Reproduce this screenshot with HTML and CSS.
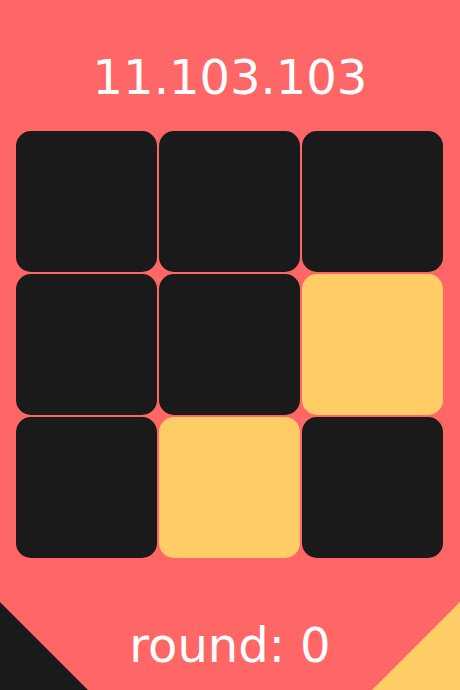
FILE: index.html
```html
<!DOCTYPE html>
<html>
<head>
<meta charset="utf-8">
<link rel="stylesheet" href="styles.css">
</head>
<body>
<div class="page">
  <div class="title">11.103.103</div>
  <div class="grid">
    <div class="tile dark"></div>
    <div class="tile dark"></div>
    <div class="tile dark"></div>
    <div class="tile dark"></div>
    <div class="tile dark"></div>
    <div class="tile light"></div>
    <div class="tile dark"></div>
    <div class="tile light"></div>
    <div class="tile dark"></div>
  </div>
  <div class="round">round: 0</div>
  <div class="corner corner-left"></div>
  <div class="corner corner-right"></div>
</div>
</body>
</html>
```
FILE: styles.css
```css
html, body {
  margin: 0;
  padding: 0;
  background: #ff6666;
}
.page {
  position: relative;
  width: 460px;
  height: 690px;
  overflow: hidden;
  display: flex;
  flex-direction: column;
  align-items: center;
  font-family: "DejaVu Sans", Verdana, sans-serif;
  color: #ffffff;
}
.title {
  margin-top: 49px;
  font-size: 48px;
  line-height: 56px;
  height: 56px;
}
.grid {
  margin-top: 26px;
  display: grid;
  grid-template-columns: repeat(3, 141px);
  grid-template-rows: repeat(3, 141px);
  gap: 2px;
  margin-left: -2px;
}
.tile {
  border-radius: 15px;
}
.dark { background: #1a1a1a; }
.light { background: #ffcc66; }
.round {
  margin-top: 59px;
  font-size: 48px;
  line-height: 56px;
  height: 56px;
}
.corner {
  position: absolute;
  bottom: 0;
  width: 88px;
  height: 88px;
}
.corner-left {
  left: 0;
  background: #1a1a1a;
  clip-path: polygon(0 0, 100% 100%, 0 100%);
}
.corner-right {
  right: 0;
  background: #ffcc66;
  clip-path: polygon(100% 0, 100% 100%, 0 100%);
}
```
